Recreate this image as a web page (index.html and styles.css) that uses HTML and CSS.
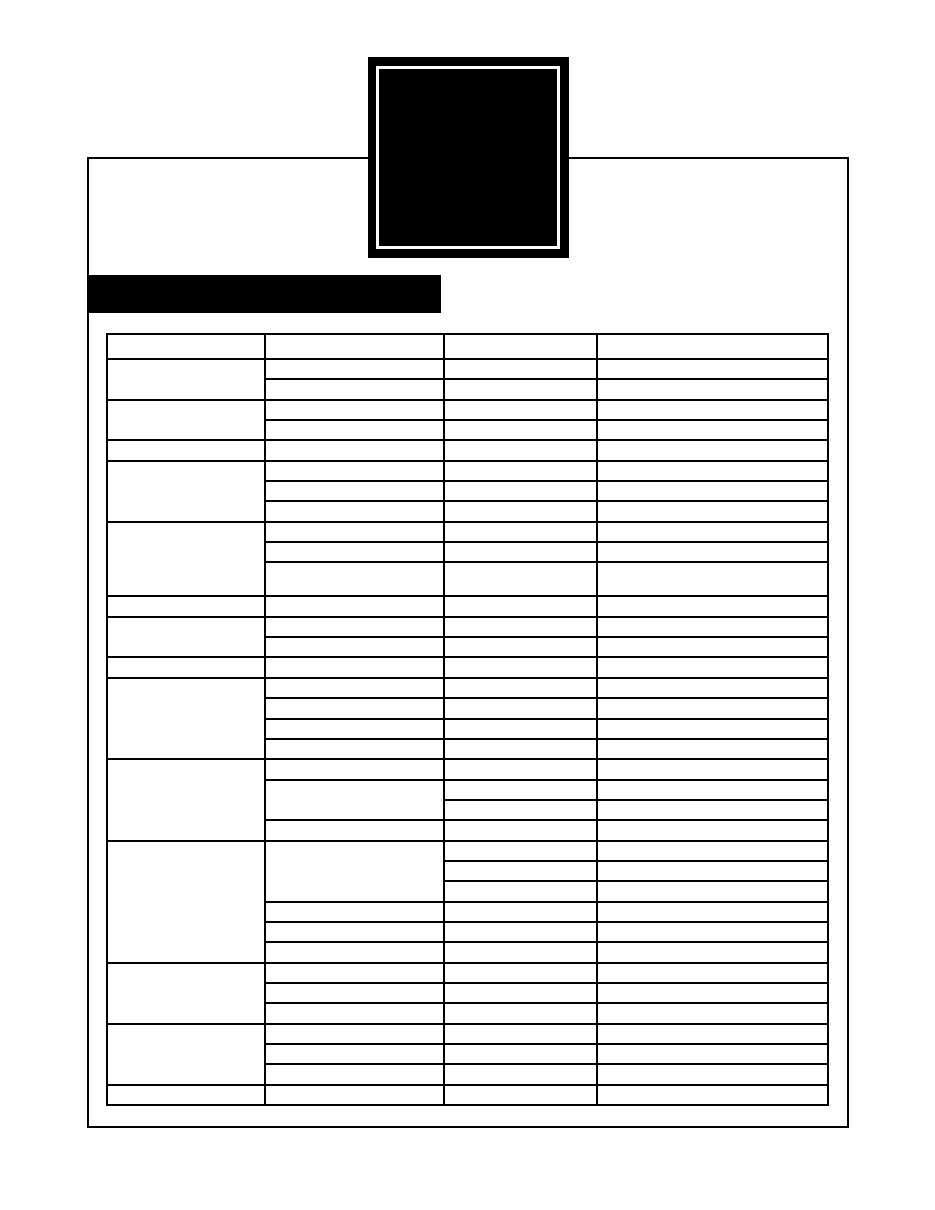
FILE: index.html
```html
<!DOCTYPE html>
<html lang="en">
<head>
<meta charset="utf-8">
<title>Form</title>
<link rel="stylesheet" href="styles.css">
</head>
<body>
<div class="emblem"><div class="emblem-inner"></div></div>
<div class="frame">
  <div class="title-bar"></div>
  <table class="grid">
    <colgroup><col class="c1"><col class="c2"><col class="c3"><col class="c4"></colgroup>
    <tr class="head"><td></td><td></td><td></td><td></td></tr>
    <tr><td rowspan="2"></td><td></td><td></td><td></td></tr>
    <tr><td></td><td></td><td></td></tr>
    <tr><td rowspan="2"></td><td></td><td></td><td></td></tr>
    <tr><td></td><td></td><td></td></tr>
    <tr><td></td><td></td><td></td><td></td></tr>
    <tr><td rowspan="3"></td><td></td><td></td><td></td></tr>
    <tr><td></td><td></td><td></td></tr>
    <tr><td></td><td></td><td></td></tr>
    <tr><td rowspan="3"></td><td></td><td></td><td></td></tr>
    <tr><td></td><td></td><td></td></tr>
    <tr class="tall"><td></td><td></td><td></td></tr>
    <tr><td></td><td></td><td></td><td></td></tr>
    <tr><td rowspan="2"></td><td></td><td></td><td></td></tr>
    <tr><td></td><td></td><td></td></tr>
    <tr><td></td><td></td><td></td><td></td></tr>
    <tr><td rowspan="4"></td><td></td><td></td><td></td></tr>
    <tr><td></td><td></td><td></td></tr>
    <tr><td></td><td></td><td></td></tr>
    <tr><td></td><td></td><td></td></tr>
    <tr><td rowspan="4"></td><td></td><td></td><td></td></tr>
    <tr><td rowspan="2"></td><td></td><td></td></tr>
    <tr><td></td><td></td></tr>
    <tr><td></td><td></td><td></td></tr>
    <tr><td rowspan="6"></td><td rowspan="3"></td><td></td><td></td></tr>
    <tr><td></td><td></td></tr>
    <tr><td></td><td></td></tr>
    <tr><td></td><td></td><td></td></tr>
    <tr><td></td><td></td><td></td></tr>
    <tr><td></td><td></td><td></td></tr>
    <tr><td rowspan="3"></td><td></td><td></td><td></td></tr>
    <tr><td></td><td></td><td></td></tr>
    <tr><td></td><td></td><td></td></tr>
    <tr><td rowspan="3"></td><td></td><td></td><td></td></tr>
    <tr><td></td><td></td><td></td></tr>
    <tr><td></td><td></td><td></td></tr>
    <tr><td></td><td></td><td></td><td></td></tr>
  </table>
</div>
</body>
</html>
```

FILE: styles.css
```css
html, body {
  margin: 0;
  padding: 0;
  background: #fff;
  font-family: "Liberation Sans", Arial, sans-serif;
}

.frame {
  box-sizing: border-box;
  width: 762px;
  height: 971px;
  margin: 157px 0 0 87px;
  border: 2px solid #000;
  padding: 116px 17px 17px 17px;
}

.title-bar {
  width: 354px;
  height: 38px;
  margin-left: -19px;
  background: #000;
}

.emblem {
  position: absolute;
  left: 368px;
  top: 57px;
  width: 201px;
  height: 201px;
  box-sizing: border-box;
  padding: 9px 9px 9px 8px;
  background: #000;
  z-index: 2;
}

.emblem-inner {
  box-sizing: border-box;
  width: 100%;
  height: 100%;
  border: 3px solid #fff;
  background: #000;
}

.grid {
  margin-top: 20px;
  width: 721px;
  table-layout: fixed;
  border-collapse: collapse;
}

.grid col.c1 { width: 158px; }
.grid col.c2 { width: 179px; }
.grid col.c3 { width: 153px; }
.grid col.c4 { width: 231px; }

.grid td {
  border: 2px solid #000;
  padding: 0;
}

.grid tr { height: 20.35px; }
.grid tr.head { height: 25px; }
.grid tr.tall { height: 34px; }
```
